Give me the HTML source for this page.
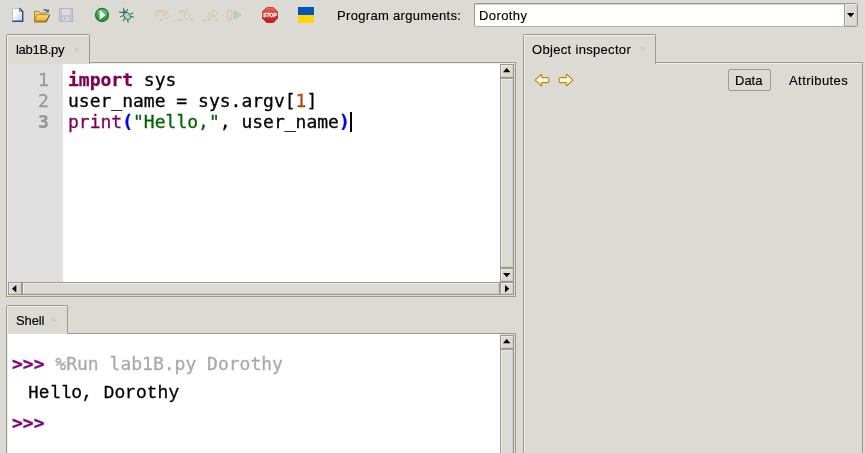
<!DOCTYPE html>
<html><head><meta charset="utf-8">
<style>
html,body{margin:0;padding:0;}
body{width:865px;height:453px;overflow:hidden;background:#dcdad5;position:relative;font-family:"Liberation Sans",sans-serif;font-size:13px;color:#000;}
.abs{position:absolute;}
.ui{position:absolute;white-space:nowrap;font-size:13px;line-height:16px;color:#000;}
.mono{position:absolute;white-space:pre;font-family:"DejaVu Sans Mono","Liberation Mono",monospace;font-size:18px;line-height:21px;color:#000;}
.io{position:absolute;white-space:pre;font-family:"Liberation Mono",monospace;font-size:18px;line-height:21px;color:#000;}
.ui,.mono,.io{will-change:transform;-webkit-text-stroke:0.3px currentColor;}
.ui{-webkit-text-stroke-width:0.15px;}
.kw{color:#7f0055;font-weight:bold;}
.bi{color:#7f0055;}
.st{color:#006400;}
.nu{color:#b04600;}
.pa{color:#0000ff;font-weight:bold;}
.frame{position:absolute;box-sizing:border-box;border:1px solid #9e9a91;}
.hl{position:absolute;background:#efedea;}
.tab{position:absolute;box-sizing:border-box;border:1px solid #9e9a91;border-bottom:none;border-radius:2px 2px 0 0;background:#dcdad5;}
.tab:before{content:"";position:absolute;left:0;top:0;right:0;bottom:0;border-left:1px solid #efedea;border-top:1px solid #efedea;}
.sb{position:absolute;box-sizing:border-box;border:1px solid #9e9a91;background:#dcdad5;}
.sb:before{content:"";position:absolute;left:0;top:0;right:0;bottom:0;border-left:1px solid #eeebe7;border-top:1px solid #eeebe7;border-right:1px solid #cfcdc8;border-bottom:1px solid #cfcdc8;}
.tri{position:absolute;width:0;height:0;}
.x{position:absolute;width:5.700px;height:5.700px;}
</style></head><body>

<!-- toolbar icons -->
<svg class="abs" style="left:10px;top:7px" width="16" height="16" viewBox="0 0 16 16"><defs><linearGradient id="gn" x1="0" y1="0" x2="1" y2="1"><stop offset="0.35" stop-color="#ffffff"/><stop offset="1" stop-color="#b9c9ea"/></linearGradient></defs><path d="M2.500 1.500h7l3 3v10h-10z" fill="url(#gn)"/><path d="M2.500 14.300v-12.800h7" fill="none" stroke="#b4c4e4" stroke-width="1"/><path d="M9.500 1.300l3.200 3.200v9.800h-10.400" fill="none" stroke="#2c4a7c" stroke-width="1.400"/><path d="M9.300 1.500v3.400h3.400z" fill="#3a5a90"/><path d="M9.800 2.600v1.800h1.800z" fill="#e8eefa"/></svg>
<svg class="abs" style="left:34px;top:7px" width="16" height="16" viewBox="0 0 16 16"><defs><linearGradient id="gf" x1="0" y1="0" x2="0" y2="1"><stop offset="0" stop-color="#fbe38c"/><stop offset="1" stop-color="#eaa91e"/></linearGradient></defs><path d="M0.600 14v-9.700h4.200l1.200 1.700h5.800v2" fill="#f0d070" stroke="#b5851a" stroke-width="1"/><path d="M0.400 14.700h12.200" stroke="#5a3c08" stroke-width="1.200"/><path d="M0.600 14.200l2.400-6.500h12.600l-3.200 6.500z" fill="url(#gf)" stroke="#b07a10" stroke-width="0.900"/><path d="M12.500 14.200l3-6" stroke="#6b4a0a" stroke-width="0.900"/><path d="M9.300 2.600c1.600-1 3.400-0.700 4.600 0.500l1-1v3.300h-3.300l1.100-1.100c-0.800-0.900-2.200-1.100-3.400-0.500z" fill="#3f65a3"/></svg>
<svg class="abs" style="left:58px;top:7px" width="16" height="16" viewBox="0 0 16 16"><rect x="1.500" y="1.500" width="13" height="13" fill="#c3c4d0" stroke="#b5b6c6"/><rect x="4" y="2" width="8" height="6" fill="#dcdcdc"/><rect x="5" y="10" width="6" height="4" fill="#d6d6de"/><rect x="6" y="11" width="2" height="2" fill="#b9bac8"/></svg>
<svg class="abs" style="left:94px;top:7px" width="16" height="16" viewBox="0 0 16 16"><defs><linearGradient id="g1" x1="0" y1="0" x2="0" y2="1"><stop offset="0" stop-color="#86d486"/><stop offset="0.5" stop-color="#3fa64a"/><stop offset="1" stop-color="#2c8c3a"/></linearGradient></defs><circle cx="8" cy="8" r="6.500" fill="url(#g1)" stroke="#1f7a30" stroke-width="1.300"/><path d="M5.700 3.200l6.100 4.800-6.100 4.800z" fill="#fff"/></svg>
<svg class="abs" style="left:118px;top:7px" width="16" height="16" viewBox="0 0 16 16"><g stroke="#1f4448" stroke-width="0.850" fill="none" stroke-linecap="round"><path d="M5.600 1.200l0.500 3.500M9.400 2.300l-1 2.800M1.500 5l3.500 0.600M2.500 9.600l3-1M5.400 14l1.200-3M10.100 15.300l-0.500-2.500M15 6l-2.500 1M15.800 10.200l-2.400-0.600"/></g><circle cx="6.300" cy="5.200" r="1.700" fill="#2a6f80"/><ellipse cx="9.200" cy="9.100" rx="3" ry="4.100" transform="rotate(-38 9.200 9.100)" fill="#a6d4a6" stroke="#2a7080" stroke-width="0.900"/><path d="M8 7.500l2.500 3.200" stroke="#d5ecd5" stroke-width="0.800"/></svg>
<svg class="abs" style="left:154px;top:7px" width="16" height="16" viewBox="0 0 16 16"><path d="M1.300 9v-3c0-1.800 1.200-2.700 2.800-2.700h6.400c2 0 3 1 3 2.700v2h2l-3.500 4.300-3.500-4.300h2.500v-1.500c0-0.600-0.400-1-1-1h-5c-0.600 0-1 0.400-1 1v2.500z" fill="#e0dcd1" stroke="#d1c7aa" stroke-width="1"/><path d="M4.800 13.600c0.600-1.500 3.400-1.500 4 0z" fill="#a9b1c0"/></svg>
<svg class="abs" style="left:178px;top:7px" width="16" height="16" viewBox="0 0 16 16"><path d="M1.300 3.400h6.200c2 0 3 1.100 3 2.700v2h2.700l-3.900 4.400-3.900-4.400h2.500v-1.500c0-0.600-0.400-1-1-1h-5.600z" fill="#e0dcd1" stroke="#d1c7aa" stroke-width="1"/><path d="M0.800 13.600c0.600-1.500 3.400-1.500 4 0zM11.800 13.600c0.600-1.500 3.400-1.500 4 0z" fill="#a9b1c0"/></svg>
<svg class="abs" style="left:202px;top:7px" width="16" height="16" viewBox="0 0 16 16"><path d="M6.300 13.200v-5.500c0-1.500 1-2.400 2.400-2.400h3v-2.600l4 3.700-4 3.700v-2.600h-2.100c-0.600 0-1 0.400-1 1v4.700z" fill="#e0dcd1" stroke="#d1c7aa" stroke-width="1"/><path d="M0.800 13.600c0.600-1.500 3.400-1.500 4 0zM12.300 13.600c0.600-1.500 3.400-1.500 4 0z" fill="#a9b1c0"/></svg>
<svg class="abs" style="left:226px;top:7px" width="16" height="16" viewBox="0 0 16 16"><rect x="1.500" y="3.300" width="4" height="9.400" fill="#dcd7c8" stroke="#d3c8a8"/><path d="M7.300 3l8.700 5-8.700 5z" fill="#b9cdb9"/></svg>
<svg class="abs" style="left:262px;top:7px;will-change:transform" width="16" height="16" viewBox="0 0 16 16"><defs><linearGradient id="g2" x1="0" y1="0" x2="0" y2="1"><stop offset="0" stop-color="#f2685a"/><stop offset="0.45" stop-color="#e03028"/><stop offset="1" stop-color="#c41e1e"/></linearGradient></defs><path d="M4.800 0.300h6.400l4.500 4.500v6.400l-4.500 4.500h-6.400l-4.500-4.500v-6.400z" fill="url(#g2)" stroke="#a01818" stroke-width="0.600"/><text x="8.050" y="10.200" font-family="Liberation Sans, sans-serif" font-weight="bold" font-size="6" text-anchor="middle" fill="#fff" stroke="#fff" stroke-width="0.350" textLength="13.400" lengthAdjust="spacingAndGlyphs">STOP</text></svg>
<div class="abs" style="left:298px;top:7px;width:16px;height:8px;background:#0057b8"></div>
<div class="abs" style="left:298px;top:15px;width:16px;height:8px;background:#ffd600"></div>

<div class="ui" id="pa" style="left:337px;top:7.5px;letter-spacing:0.32px;">Program arguments:</div>

<!-- combobox -->
<div class="abs" style="left:474px;top:3px;width:371px;height:24px;box-sizing:border-box;background:#fff;border:1px solid #9e9a91;border-right:none;border-bottom-color:#b5b1a8;border-radius:2px 0 0 2px;box-shadow:inset 0 1px 0 #d5d2cc;"></div>
<div class="ui" id="cbt" style="left:479px;top:7.5px;letter-spacing:0.4px;">Dorothy</div>
<div class="sb" style="left:844px;top:3px;width:14px;height:24px;border-radius:0 2px 2px 0;"></div>
<svg class="abs" style="left:846.900px;top:12.900px" width="8" height="5" viewBox="0 0 8 5"><path d="M0 0h7.400l-3.700 4.300z" fill="#000"/></svg>

<!-- editor notebook -->
<div class="frame" style="left:6px;top:62px;width:510px;height:235px;"></div>
<div class="hl" style="left:7px;top:63px;width:1px;height:233px;"></div>
<div class="hl" style="left:7px;top:63px;width:508px;height:1px;"></div>
<div class="tab" style="left:6px;top:34px;width:84px;height:30px;"></div>
<div class="ui" id="t1" style="left:16px;top:42px;letter-spacing:-0.3px;">lab1B.py</div>
<svg class="x" style="left:73.600px;top:46.500px" viewBox="0 0 7 7"><path d="M0.500 0.500l6 6M6.500 0.500l-6 6" stroke="#c3b4cb" stroke-width="0.800" fill="none"/></svg>

<div class="abs" style="left:8px;top:64px;width:55px;height:218px;background:#e0e0e0;"></div>
<div class="abs" style="left:63px;top:64px;width:437px;height:218px;background:#fff;"></div>
<div class="mono" style="left:38px;top:69px;transform:translateY(0.450px);color:#999;">1
2
<b style="color:#959595;-webkit-text-stroke-width:0.200px">3</b></div>
<div class="mono" id="code" style="left:68px;top:69px;transform:translateY(0.450px);"><span class="kw">import</span> sys
user_name = sys.argv[<span class="nu">1</span>]
<span class="bi">print</span><span class="pa">(</span><span class="st">"Hello,"</span>, user_name<span class="pa">)</span></div>
<div class="abs" style="left:350px;top:112px;width:2px;height:20px;background:#000;"></div>

<!-- editor v scrollbar -->
<div class="sb" style="left:500px;top:64px;width:14px;height:14px;"></div>
<div class="sb" style="left:500px;top:78px;width:14px;height:190px;"></div>
<div class="sb" style="left:500px;top:268px;width:14px;height:14px;"></div>
<svg class="abs" style="left:502.800px;top:67.800px" width="8" height="5" viewBox="0 0 8 5"><path d="M0 4.300l3.700-4.300 3.700 4.300z" fill="#000"/></svg>
<svg class="abs" style="left:502.800px;top:273px" width="8" height="5" viewBox="0 0 8 5"><path d="M0 0h7.400l-3.700 4.300z" fill="#000"/></svg>
<!-- editor h scrollbar -->
<div class="sb" style="left:8px;top:282px;width:14px;height:13px;"></div>
<div class="sb" style="left:22px;top:282px;width:478px;height:13px;"></div>
<div class="sb" style="left:500px;top:282px;width:14px;height:13px;"></div>
<svg class="abs" style="left:11.900px;top:284.900px" width="5" height="8" viewBox="0 0 5 8"><path d="M4.300 0v7.400l-4.300-3.700z" fill="#000"/></svg>
<svg class="abs" style="left:505px;top:284.900px" width="5" height="8" viewBox="0 0 5 8"><path d="M0 0v7.400l4.300-3.700z" fill="#000"/></svg>

<!-- shell notebook -->
<div class="frame" style="left:6px;top:333px;width:510px;height:130px;"></div>
<div class="hl" style="left:7px;top:334px;width:1px;height:125px;"></div>
<div class="tab" style="left:6px;top:305px;width:62px;height:30px;"></div>
<div class="ui" id="t2" style="left:15.5px;top:313px;letter-spacing:-0.1px;">Shell</div>
<svg class="x" style="left:51.400px;top:317.400px" viewBox="0 0 7 7"><path d="M0.500 0.500l6 6M6.500 0.500l-6 6" stroke="#c3b4cb" stroke-width="0.800" fill="none"/></svg>
<div class="abs" style="left:8px;top:334px;width:492px;height:125px;background:#fff;"></div>
<div class="mono" id="s1" style="left:12.3px;top:353px;"><b style="color:#800080">&gt;&gt;&gt;</b> <span style="color:#aaa">%Run lab1B.py Dorothy</span></div>
<div class="io" id="s2" style="left:28px;top:383px;">Hello, Dorothy</div>
<div class="mono" id="s3" style="left:12.3px;top:412px;"><b style="color:#800080">&gt;&gt;&gt;</b></div>
<!-- shell v scrollbar -->
<div class="sb" style="left:500px;top:335px;width:14px;height:14px;"></div>
<div class="sb" style="left:500px;top:349px;width:14px;height:120px;"></div>
<svg class="abs" style="left:502.800px;top:339px" width="8" height="5" viewBox="0 0 8 5"><path d="M0 4.300l3.700-4.300 3.700 4.300z" fill="#000"/></svg>

<!-- right notebook -->
<div class="frame" style="left:523px;top:62px;width:340px;height:400px;"></div>
<div class="hl" style="left:524px;top:63px;width:1px;height:395px;"></div>
<div class="hl" style="left:524px;top:63px;width:338px;height:1px;"></div>
<div class="tab" style="left:523px;top:34px;width:133px;height:30px;"></div>
<div class="ui" id="t3" style="left:532px;top:42px;letter-spacing:0.32px;">Object inspector</div>
<svg class="x" style="left:639.600px;top:46.400px" viewBox="0 0 7 7"><path d="M0.500 0.500l6 6M6.500 0.500l-6 6" stroke="#c3b4cb" stroke-width="0.800" fill="none"/></svg>

<svg class="abs" style="left:534px;top:73px" width="16" height="14" viewBox="0 0 16 14"><defs><linearGradient id="ga" x1="0" y1="0" x2="0" y2="1"><stop offset="0" stop-color="#fff6d0"/><stop offset="0.45" stop-color="#fffdf2"/><stop offset="1" stop-color="#ffe08a"/></linearGradient></defs><path d="M1.200 7.100l5.800-5.600h0.800v3.100h6c0.700 0 1 0.300 1 1v3c0 0.700-0.300 1-1 1h-6v3.100h-0.800z" fill="url(#ga)" stroke="#c4830f" stroke-width="1.100" stroke-linejoin="round"/></svg>
<svg class="abs" style="left:558px;top:73px" width="16" height="14" viewBox="0 0 16 14"><path d="M14.800 7.100l-5.800-5.600h-0.800v3.100h-6c-0.700 0-1 0.300-1 1v3c0 0.700 0.300 1 1 1h6v3.100h0.800z" fill="url(#ga)" stroke="#c4830f" stroke-width="1.100" stroke-linejoin="round"/></svg>

<div class="abs" style="left:728px;top:69px;width:43px;height:22px;box-sizing:border-box;border:1px solid #9e9a91;border-radius:2px;"></div>
<div class="ui" id="b1" style="left:735px;top:72.5px;">Data</div>
<div class="ui" id="b2" style="left:789px;top:72.5px;letter-spacing:0.43px;">Attributes</div>

</body></html>
